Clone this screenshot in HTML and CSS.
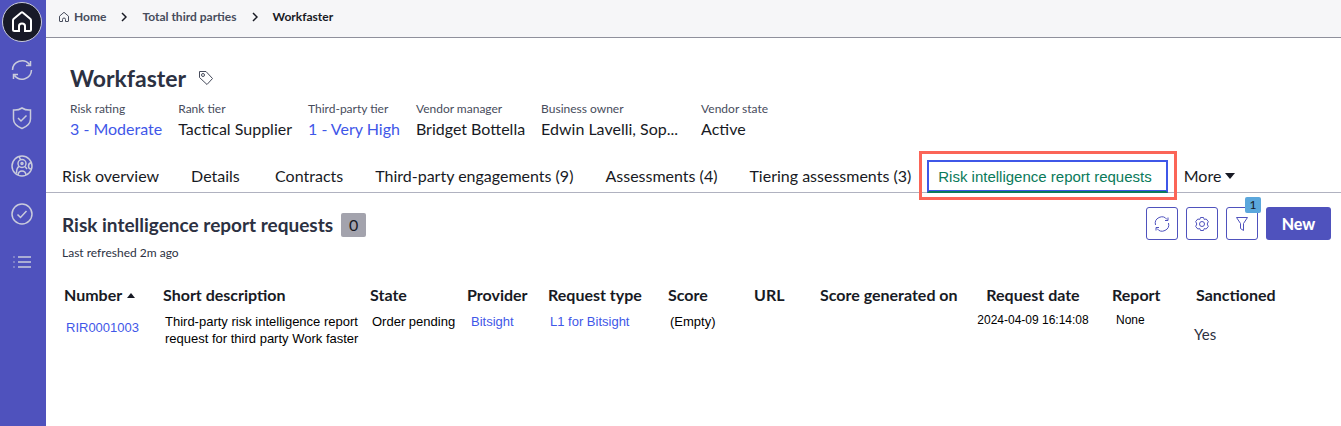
FILE: index.html
```html
<!DOCTYPE html>
<html lang="en">
<head>
    <meta charset="UTF-8">
    <meta name="viewport" content="width=device-width, initial-scale=1.0">
    <title>Workfaster</title>
    <link rel="stylesheet" href="styles.css">
</head>
<body>
    <div class="app">
        <nav class="sidebar" aria-label="Main">
            <a href="#" class="side-link home" aria-label="Home">
                <svg width="24" height="24" viewBox="0 0 24 24"><path d="M9 21H4.500Q3 21 3 19.500V10.500Q3 9.500 3.800 8.800L11 2.700Q12 2 13 2.700L20.200 8.800Q21 9.500 21 10.500V19.500Q21 21 19.500 21H15V16Q15 13.500 12 13.500T9 16Z"/></svg>
            </a>
            <a href="#" class="side-link" aria-label="Refresh">
                <svg width="24" height="24" viewBox="0 0 24 24"><path d="M2.500 12A9.500 9.500 0 0 1 19.500 6.500M21.500 12A9.500 9.500 0 0 1 4.500 17.500M20.500 3V7.500H16M3.500 21V16.500H8"/></svg>
            </a>
            <a href="#" class="side-link" aria-label="Risk">
                <svg width="24" height="24" viewBox="0 0 24 24"><path d="M12 2Q16 4.500 20.500 4V13Q20.500 19 12 22.500Q3.500 19 3.500 13V4Q8 4.500 12 2ZM8 12L11 15L16.500 9.500"/></svg>
            </a>
            <a href="#" class="side-link" aria-label="Third parties">
                <svg width="24" height="24" viewBox="0 0 24 24"><circle cx="12" cy="12" r="10"/><circle cx="12" cy="9.500" r="4"/><circle cx="12" cy="9.500" r="1"/><path d="M9 2.500L10.500 5.500M9 12.500Q6.500 14 6.500 19M15 12.500L17 15M8 21Q8.500 17 12 17T16 21M21.500 8.500Q18.500 9 18.500 12T21 15"/></svg>
            </a>
            <a href="#" class="side-link" aria-label="Tasks">
                <svg width="24" height="24" viewBox="0 0 24 24"><circle cx="12" cy="12" r="10"/><path d="M7.500 12.500L10.500 15.500L16.500 9"/></svg>
            </a>
            <a href="#" class="side-link" aria-label="Lists">
                <svg width="24" height="24" viewBox="0 0 24 24"><path d="M8 7H21M8 12H21M8 17H21"/><path class="dots" d="M3 7H5M3 12H5M3 17H5"/></svg>
            </a>
        </nav>

        <main class="content">
            <nav class="breadcrumb" aria-label="Breadcrumb">
                <a href="#" class="crumb">
                    <svg width="12" height="12" viewBox="0 0 12 12"><path d="M4.500 10.500H2Q1.500 10.500 1.500 10V5.200L6 1.300L10.500 5.200V10Q10.500 10.500 10 10.500H7.500V8.500Q7.500 7 6 7T4.500 8.500Z"/></svg>
                    Home
                </a>
                <svg class="chevron" width="6" height="10" viewBox="0 0 6 10"><path d="M1 1L5 5L1 9"/></svg>
                <a href="#" class="crumb">Total third parties</a>
                <svg class="chevron" width="6" height="10" viewBox="0 0 6 10"><path d="M1 1L5 5L1 9"/></svg>
                <span class="crumb current">Workfaster</span>
            </nav>

            <header class="record">
                <div class="title-row">
                    <h1>Workfaster</h1>
                    <svg class="tag" width="16" height="16" viewBox="0 0 16 16"><path d="M1.500 1.500H8L14.500 8.500L9 14.500L1.500 7.500Z"/><circle cx="5" cy="5" r="1.500"/></svg>
                </div>
                <dl class="facts">
                    <div><dt>Risk rating</dt><dd><a href="#">3 - Moderate</a></dd></div>
                    <div><dt>Rank tier</dt><dd>Tactical Supplier</dd></div>
                    <div><dt>Third-party tier</dt><dd><a href="#">1 - Very High</a></dd></div>
                    <div><dt>Vendor manager</dt><dd>Bridget Bottella</dd></div>
                    <div class="owner"><dt>Business owner</dt><dd>Edwin Lavelli, Sop...</dd></div>
                    <div><dt>Vendor state</dt><dd>Active</dd></div>
                </dl>
            </header>

            <nav class="tabs" aria-label="Record sections">
                <a href="#" class="tab">Risk overview</a>
                <a href="#" class="tab">Details</a>
                <a href="#" class="tab">Contracts</a>
                <a href="#" class="tab">Third-party engagements (9)</a>
                <a href="#" class="tab">Assessments (4)</a>
                <a href="#" class="tab">Tiering assessments (3)</a>
                <a href="#" class="tab active" aria-current="page">Risk intelligence report requests</a>
                <button type="button" class="tab more">More
                    <svg width="10" height="6" viewBox="0 0 10 6"><path d="M0 0H10L5 6Z"/></svg>
                </button>
            </nav>

            <section class="list">
                <div class="list-header">
                    <div>
                        <h2>Risk intelligence report requests <span class="count">0</span></h2>
                        <p class="refreshed">Last refreshed 2m ago</p>
                    </div>
                    <div class="actions">
                        <button type="button" class="icon-button" aria-label="Refresh list">
                            <svg width="16" height="16" viewBox="0 0 16 16"><path d="M1.500 9A6.500 6.500 0 0 1 13 3.500M14.500 7A6.500 6.500 0 0 1 3 12.500M14 1.500V4.500H11M2 14.500V11.500H5"/></svg>
                        </button>
                        <button type="button" class="icon-button" aria-label="List settings">
                            <svg width="16" height="16" viewBox="0 0 16 16"><path d="M6.500 1.500H9.500L10.200 3.400L12.200 3L14.300 5.500L13.200 8L14.300 10.500L12.200 13L10.200 12.600L9.500 14.500H6.500L5.800 12.600L3.800 13L1.700 10.500L2.800 8L1.700 5.500L3.800 3L5.800 3.400Z"/><circle cx="8" cy="8" r="2.500"/></svg>
                        </button>
                        <button type="button" class="icon-button" aria-label="Filter, 1 applied">
                            <svg width="16" height="16" viewBox="0 0 16 16"><path d="M2.500 1.500H13.500L9.500 7.500V14.500L6.500 12.500V7.500Z"/></svg>
                            <span class="badge">1</span>
                        </button>
                        <button type="button" class="new-button">New</button>
                    </div>
                </div>

                <table>
                    <colgroup>
                        <col class="col-number">
                        <col class="col-description">
                        <col class="col-state">
                        <col class="col-provider">
                        <col class="col-type">
                        <col class="col-score">
                        <col class="col-url">
                        <col class="col-generated">
                        <col class="col-date">
                        <col class="col-report">
                        <col>
                    </colgroup>
                    <thead>
                        <tr>
                            <th>Number <svg width="8" height="5" viewBox="0 0 8 5"><path d="M0 5H8L4 0Z"/></svg></th>
                            <th>Short description</th>
                            <th>State</th>
                            <th>Provider</th>
                            <th>Request type</th>
                            <th>Score</th>
                            <th>URL</th>
                            <th>Score generated on</th>
                            <th class="date">Request date</th>
                            <th>Report</th>
                            <th>Sanctioned</th>
                        </tr>
                    </thead>
                    <tbody>
                        <tr>
                            <td class="number"><a href="#">RIR0001003</a></td>
                            <td>Third-party risk intelligence report request for third party Work faster</td>
                            <td>Order pending</td>
                            <td class="indent"><a href="#">Bitsight</a></td>
                            <td><a href="#">L1 for Bitsight</a></td>
                            <td>(Empty)</td>
                            <td></td>
                            <td></td>
                            <td class="date small">2024-04-09 16:14:08</td>
                            <td class="indent small">None</td>
                            <td class="sanctioned">Yes</td>
                        </tr>
                    </tbody>
                </table>
            </section>
        </main>
    </div>
</body>
</html>
```
FILE: styles.css
```css
* {
    box-sizing: border-box;
}

body {
    margin: 0;
    background: #fff;
    color: #181a24;
    font-family: Lato, sans-serif;
    font-size: 16px;
}

a {
    color: #3f57e8;
    text-decoration: none;
}

button {
    font-family: inherit;
    cursor: pointer;
}

svg {
    fill: none;
    stroke: currentColor;
    flex-shrink: 0;
}

.app {
    display: flex;
    min-height: 100vh;
}

/* Left navigation */
.sidebar {
    display: flex;
    flex-direction: column;
    align-items: center;
    gap: 8px;
    width: 46px;
    flex-shrink: 0;
    padding: 2px 2px 0 0;
    background: #4f52bd;
}

.side-link {
    display: flex;
    align-items: center;
    justify-content: center;
    width: 40px;
    height: 40px;
    color: #c9cbdc;
    stroke-width: 1.5;
}

.side-link.home {
    border: 1px solid #c9cbdc;
    border-radius: 50%;
    background: #181a28;
    color: #fff;
    stroke-width: 2;
}

.dots {
    opacity: 0.5;
}

.content {
    flex: 1;
    min-width: 0;
}

/* Breadcrumb */
.breadcrumb {
    display: flex;
    align-items: center;
    gap: 15px;
    height: 38px;
    padding: 0 12px 4px;
    border-bottom: 1px solid #8f909c;
    background: #f6f6f8;
}

.crumb {
    display: flex;
    align-items: center;
    gap: 4px;
    color: #474c5c;
    font-size: 12px;
    font-weight: 700;
}

.crumb.current {
    color: #181a24;
}

.chevron {
    stroke-width: 1.5;
}

/* Record header */
.record {
    padding: 24px 24px 0;
}

.title-row {
    display: flex;
    align-items: center;
    gap: 12px;
}

h1,
h2 {
    margin: 0;
    color: #2c3142;
    font-weight: 700;
}

h1 {
    font-size: 23px;
    line-height: 32px;
}

.tag {
    color: #474c5c;
}

.facts {
    display: flex;
    gap: 16px;
    margin: 7px 0 0;
}

.facts dt {
    color: #474c5c;
    font-size: 12px;
    line-height: 16px;
}

.facts dd {
    margin: 1px 0 0;
    line-height: 22px;
    white-space: nowrap;
}

.facts .owner {
    width: 144px;
}

/* Tabs */
.tabs {
    display: flex;
    margin-top: 20px;
    border-bottom: 1px solid #b0b2c0;
}

.tab {
    min-width: 84px;
    height: 32px;
    padding: 0 16px;
    color: #181a24;
    line-height: 32px;
    white-space: nowrap;
}

.tab.active {
    position: relative;
    height: 33px;
    margin-bottom: -1px;
    padding: 0 14px 0 9px;
    border: 2px solid #3f57e8;
    border-bottom-color: #0a7a5a;
    color: #0a7a5a;
    font-family: "Liberation Sans", sans-serif;
    font-size: 15px;
    line-height: 30px;
}

/* Blue edge just above the green underline */
.tab.active::before {
    content: "";
    position: absolute;
    right: 0;
    bottom: 0;
    left: 0;
    border-bottom: 1px solid #3f57e8;
}

/* Callout frame round the active tab */
.tab.active::after {
    content: "";
    position: absolute;
    inset: -11px -11px -9px -10px;
    border: 3px solid #fb6557;
}

.more {
    display: flex;
    align-items: center;
    gap: 4px;
    border: none;
    background: none;
    font-size: 16px;
}

.more svg,
th svg {
    fill: currentColor;
    stroke: none;
}

/* List */
.list {
    padding: 14px 10px 0 16px;
}

.list-header {
    display: flex;
    justify-content: space-between;
}

h2 {
    display: flex;
    align-items: center;
    gap: 8px;
    margin-top: 6px;
    font-size: 19px;
    line-height: 24px;
}

.count {
    width: 25px;
    border-radius: 2px;
    background: #a3a3ad;
    color: #181a24;
    font-size: 16px;
    font-weight: 400;
    text-align: center;
}

.refreshed {
    margin: 8px 0 0;
    color: #2c3142;
    font-size: 12px;
    line-height: 16px;
}

.actions {
    display: flex;
    gap: 8px;
    height: 33px;
}

.icon-button {
    position: relative;
    display: flex;
    align-items: center;
    justify-content: center;
    width: 32px;
    padding: 0;
    border: 1px solid #4f52bd;
    border-radius: 3px;
    background: #fff;
    color: #4f52bd;
}

.badge {
    position: absolute;
    top: -11px;
    right: -4px;
    width: 16px;
    border-radius: 2px;
    background: #5ba7dc;
    color: #181a24;
    font-size: 12px;
    line-height: 16px;
}

.new-button {
    width: 65px;
    padding: 0;
    border: none;
    border-radius: 3px;
    background: #4f52bd;
    color: #fff;
    font-size: 16px;
    font-weight: 900;
}

table {
    width: 100%;
    margin-top: 24px;
    border-collapse: collapse;
    table-layout: fixed;
}

th {
    padding: 0 0 0 2px;
    font-size: 16px;
    line-height: 20px;
    text-align: left;
    white-space: nowrap;
}

th svg {
    margin: 0 0 3px 1px;
}

td {
    padding: 8px 8px 0 4px;
    color: #000;
    font-family: "Liberation Sans", sans-serif;
    font-size: 13px;
    line-height: 17px;
    vertical-align: top;
}

td.number {
    padding-top: 14px;
}

td.indent {
    padding-left: 6px;
}

td.small {
    font-size: 12px;
    line-height: 14px;
}

th.date,
td.date {
    padding-left: 0;
    padding-right: 20px;
    text-align: center;
    white-space: nowrap;
}

td.sanctioned {
    padding: 19px 0 0;
    color: #2c3142;
    font-family: Lato, sans-serif;
    font-size: 15px;
    line-height: 20px;
}

.col-number {
    width: 99px;
}

.col-description {
    width: 207px;
}

.col-state {
    width: 97px;
}

.col-provider {
    width: 81px;
}

.col-type {
    width: 120px;
}

.col-score {
    width: 86px;
}

.col-url {
    width: 66px;
}

.col-generated {
    width: 158px;
}

.col-date {
    width: 134px;
}

.col-report {
    width: 84px;
}
```
